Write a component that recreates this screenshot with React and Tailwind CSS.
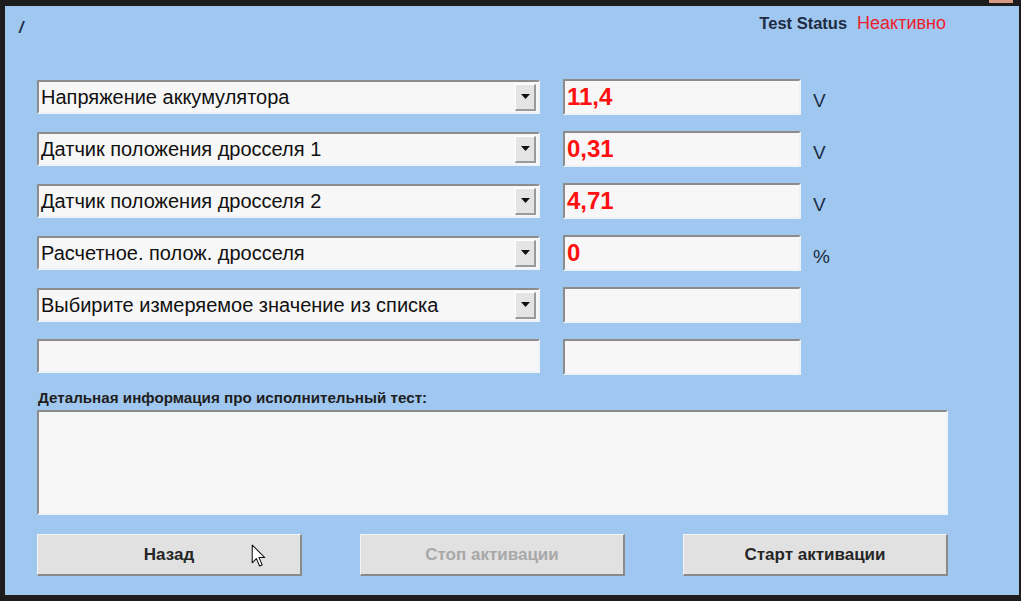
import React from "react";

const font = { fontFamily: '"Liberation Sans", Arial, sans-serif' };

function Box({ className = "", children }) {
  return (
    <div
      className={
        "border-t-2 border-l-2 border-b-2 border-r-2 border-t-[#8c8c8c] border-l-[#8c8c8c] border-b-[#eef3f8] border-r-[#eef3f8] bg-[#f7f7f7] flex items-center " +
        className
      }
    >
      {children}
    </div>
  );
}

function Select({ text }) {
  return (
    <Box className="w-[503px] h-[34px] justify-between pl-[2px] pr-[2px]">
      <span className="text-[20px] text-[#111] leading-none">{text}</span>
      <div className="w-[21px] h-[27px] bg-[#e4e4e4] border-t border-l border-t-[#ffffff] border-l-[#ffffff] border-b-2 border-r-2 border-b-[#9a9a9a] border-r-[#9a9a9a] flex items-center justify-center">
        <svg width="9" height="5" viewBox="0 0 9 5">
          <path d="M0 0 L9 0 L4.5 5 Z" fill="#111" />
        </svg>
      </div>
    </Box>
  );
}

function ValueBox({ value }) {
  return (
    <Box className="w-[238px] h-[36px] pl-[2px]">
      <span className="text-[24px] font-bold text-[#ff1010] leading-none">{value}</span>
    </Box>
  );
}

function Row({ label, value, unit, plain }) {
  return (
    <div className="flex items-start h-[36px]">
      {plain ? (
        <Box className="w-[503px] h-[34px]" />
      ) : (
        <div className="pt-[1px]">
          <Select text={label} />
        </div>
      )}
      <div className="ml-[23px]">
        <ValueBox value={value} />
      </div>
      {unit && (
        <span className="ml-[12px] mt-[12px] text-[19px] leading-none text-[#1c2c44]">{unit}</span>
      )}
    </div>
  );
}

function Button({ children, disabled }) {
  return (
    <div className="h-[42px] w-[265px] bg-[#e1e1e1] border-t border-l border-t-[#f4f4f4] border-l-[#f4f4f4] border-b-2 border-r-2 border-b-[#8a8a8a] border-r-[#8a8a8a] flex items-center justify-center">
      <span
        className={
          "text-[17px] font-bold leading-none " +
          (disabled ? "text-[#a8a8a8]" : "text-[#262626]")
        }
      >
        {children}
      </span>
    </div>
  );
}

export default function App() {
  return (
    <div
      style={font}
      className="relative w-[1021px] h-[601px] bg-[#1d1d1d] pt-[6px] pl-[5px] pr-[2px] pb-[6px] overflow-hidden"
    >
      <div className="absolute right-[8px] top-0 w-[24px] h-[3px] bg-[#d89a80]" />
      <div className="relative w-full h-full bg-[#a0c7ef] flex flex-col">
        <div className="flex justify-between h-[73px]">
          <span className="ml-[14px] mt-[14px] text-[16px] italic font-bold text-[#1c2c44] leading-none">/</span>
          <div className="mr-[73px] mt-[8px] flex items-baseline leading-none">
            <span className="text-[16.5px] font-bold text-[#1c2c44]">Test Status</span>
            <span className="ml-[10px] text-[18px] text-[#ee1c2c]">Неактивно</span>
          </div>
        </div>
        <div className="pl-[32px] flex flex-col gap-[16px]">
          <Row label="Напряжение аккумулятора" value="11,4" unit="V" />
          <Row label="Датчик положения дросселя 1" value="0,31" unit="V" />
          <Row label="Датчик положения дросселя 2" value="4,71" unit="V" />
          <Row label="Расчетное. полож. дросселя" value="0" unit="%" />
          <Row label="Выбирите измеряемое значение из списка" value="" />
          <Row plain value="" />
        </div>
        <div className="pl-[33px] mt-[15px] text-[15.2px] font-bold text-[#1e1e1e] leading-none">
          Детальная информация про исполнительный тест:
        </div>
        <div className="pl-[32px] mt-[5px]">
          <Box className="w-[911px] h-[105px]" />
        </div>
        <div className="pl-[32px] mt-[19px] flex gap-[58px]">
          <Button>Назад</Button>
          <Button disabled>Стоп активации</Button>
          <Button>Старт активации</Button>
        </div>
        <svg
          className="absolute left-[246px] top-[538px]"
          width="15"
          height="23"
          viewBox="0 0 14 22"
        >
          <path
            d="M1 1 L1 18 L5 14 L8 21 L10.5 20 L7.5 13 L13 13 Z"
            fill="#fff"
            stroke="#111"
            strokeWidth="1"
            strokeLinejoin="round"
          />
        </svg>
      </div>
    </div>
  );
}
